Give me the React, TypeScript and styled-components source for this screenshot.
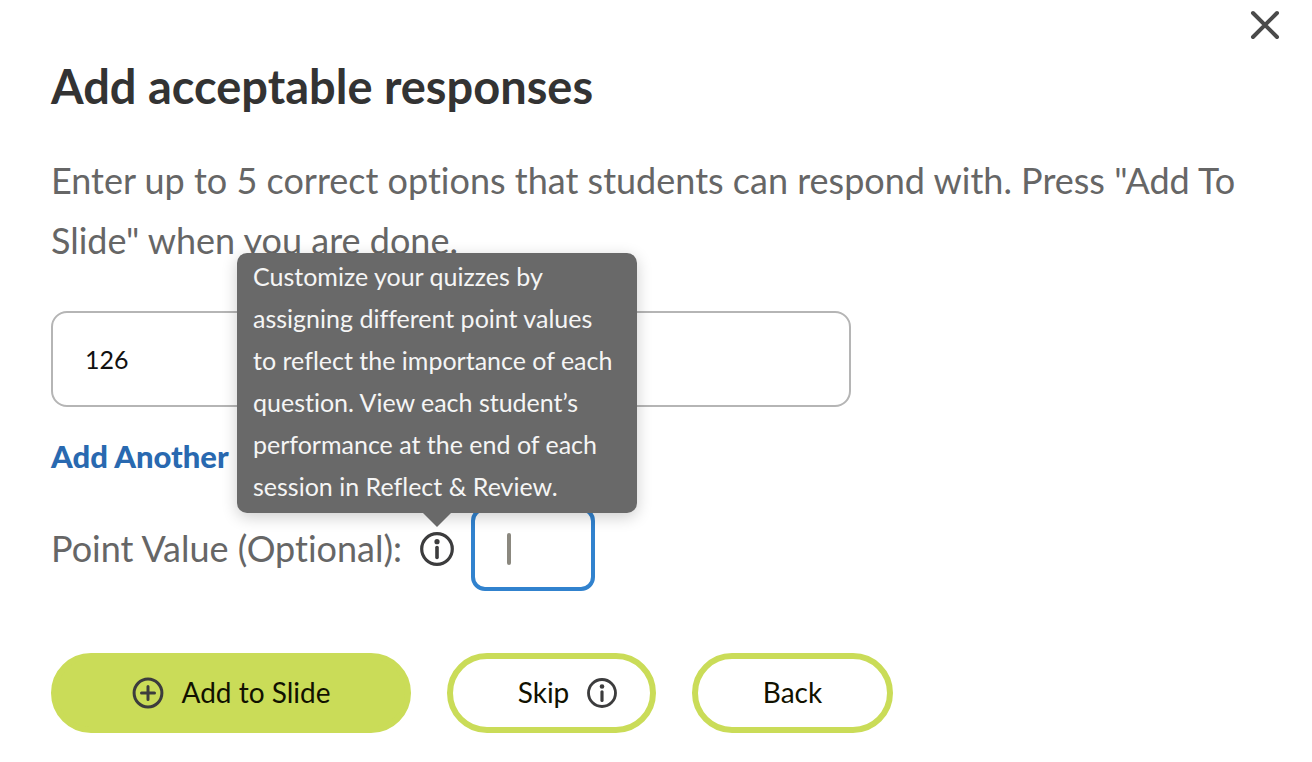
import React, { useState } from "react";
import styled, { createGlobalStyle } from "styled-components";

const GlobalStyle = createGlobalStyle`
  *, *::before, *::after {
    box-sizing: border-box;
  }
  body {
    margin: 0;
    background: #ffffff;
    color: #666666;
    font-family: Lato, "Open Sans", sans-serif;
    font-variant-ligatures: no-common-ligatures;
  }
`;

const Dialog = styled.main`
  position: relative;
  padding: 56px 52px 28px 51px;
`;

const CloseButton = styled.button`
  position: absolute;
  top: 8px;
  right: 30px;
  display: flex;
  padding: 0;
  border: 0;
  background: none;
  cursor: pointer;
`;

const Title = styled.h1`
  margin: 0;
  color: #333333;
  font-size: 47px;
  line-height: 60px;
  font-weight: 700;
`;

const Description = styled.p`
  margin: 34px 0 41px;
  font-size: 36px;
  line-height: 60px;
`;

const ResponseInput = styled.input`
  display: block;
  width: 100%;
  max-width: 800px;
  height: 96px;
  padding: 0 32px;
  border: 2px solid #b5b5b5;
  border-radius: 16px;
  background: #ffffff;
  color: #111111;
  font: inherit;
  font-size: 25px;
  outline: none;
`;

const AddLink = styled.a`
  display: block;
  width: fit-content;
  margin: 29px 0 31px;
  color: #2969b0;
  font-size: 31px;
  line-height: 40px;
  font-weight: 900;
  text-decoration: none;
`;

const PointRow = styled.div`
  display: flex;
  align-items: center;
`;

const PointLabel = styled.label`
  width: 369px;
  padding-bottom: 2px;
  font-size: 36px;
  line-height: 60px;
`;

const InfoAnchor = styled.span`
  position: relative;
  display: flex;
  margin-right: 17px;
`;

const Tooltip = styled.div`
  position: absolute;
  z-index: 1;
  bottom: calc(100% + 19px);
  left: 50%;
  width: 400px;
  margin-left: -200px;
  padding: 2px 16px 6px;
  border-radius: 10px;
  background: #696969;
  color: #f5f5f5;
  box-shadow: 0 4px 16px rgba(0, 0, 0, 0.2);
  font-size: 25px;
  line-height: 42px;
  white-space: pre;

  &::after {
    content: "";
    position: absolute;
    top: 100%;
    left: 50%;
    margin-left: -14px;
    border: 14px solid transparent;
    border-bottom: 0;
    border-top-color: #696969;
  }
`;

const PointField = styled.span`
  position: relative;
  display: flex;
`;

const PointInput = styled.input`
  width: 124px;
  height: 84px;
  padding: 0 32px;
  border: 4px solid #3182ce;
  border-radius: 14px;
  background: #ffffff;
  color: #111111;
  font: inherit;
  font-size: 25px;
  outline: none;
`;

const Caret = styled.span`
  position: absolute;
  top: 26px;
  left: 36px;
  width: 4px;
  height: 32px;
  border-radius: 2px;
  background: #8b887f;
  pointer-events: none;
`;

const Actions = styled.div`
  display: flex;
  flex-wrap: wrap;
  gap: 36px;
  margin-top: 62px;
`;

const PillButton = styled.button<{ $filled?: boolean; $trailingIcon?: boolean; $width: number }>`
  display: flex;
  align-items: center;
  justify-content: center;
  gap: 18px;
  min-width: ${({ $width }) => $width}px;
  height: 80px;
  padding: ${({ $trailingIcon }) => ($trailingIcon ? "0 32px 0 64px" : "0 32px")};
  border: 6px solid #cadc58;
  border-radius: 40px;
  background: ${({ $filled }) => ($filled ? "#cadc58" : "#ffffff")};
  color: #111100;
  font: inherit;
  font-size: 28px;
  line-height: 32px;
  cursor: pointer;
`;

const ButtonText = styled.span`
  padding-bottom: 2px;
`;

const InfoIcon = ({ size }: { size: number }) => (
  <svg width={size} height={size} viewBox="0 0 34 34" fill="none" aria-hidden="true">
    <circle cx="17" cy="17" r="15.3" stroke="#3c3c3d" strokeWidth="3.2" />
    <circle cx="17" cy="9.7" r="2.6" fill="#3c3c3d" />
    <path d="M17 15.6V25.4" stroke="#3c3c3d" strokeWidth="3.6" strokeLinecap="round" />
  </svg>
);

const PlusIcon = () => (
  <svg width="32" height="32" viewBox="0 0 32 32" fill="none" aria-hidden="true">
    <circle cx="16" cy="16" r="13.9" stroke="#3c3c3d" strokeWidth="3" />
    <path d="M16 9.5V22.5M9.5 16H22.5" stroke="#3c3c3d" strokeWidth="3" strokeLinecap="round" />
  </svg>
);

const tooltipText = `Customize your quizzes by
assigning different point values
to reflect the importance of each
question. View each student’s
performance at the end of each
session in Reflect & Review.`;

export default function App() {
  const [response, setResponse] = useState("126");
  const [points, setPoints] = useState("");

  return (
    <>
      <GlobalStyle />
      <Dialog>
        <CloseButton type="button" aria-label="Close">
          <svg width="34" height="34" viewBox="0 0 34 34" fill="none" aria-hidden="true">
            <path d="M5 5L29 29M29 5L5 29" stroke="#4a4a4a" strokeWidth="4" strokeLinecap="round" />
          </svg>
        </CloseButton>
        <Title>Add acceptable responses</Title>
        <Description>
          Enter up to 5 correct options that students can respond with. Press "Add To Slide" when you are done.
        </Description>
        <ResponseInput
          type="text"
          aria-label="Acceptable response"
          value={response}
          onChange={(e) => setResponse(e.target.value)}
        />
        <AddLink href="#add">Add Another</AddLink>
        <PointRow>
          <PointLabel htmlFor="points">Point Value (Optional):</PointLabel>
          <InfoAnchor>
            <InfoIcon size={34} />
            <Tooltip role="tooltip">{tooltipText}</Tooltip>
          </InfoAnchor>
          <PointField>
            <PointInput id="points" type="text" value={points} onChange={(e) => setPoints(e.target.value)} />
            {points === "" && <Caret />}
          </PointField>
        </PointRow>
        <Actions>
          <PillButton type="button" $filled $width={360}>
            <PlusIcon />
            <ButtonText>Add to Slide</ButtonText>
          </PillButton>
          <PillButton type="button" $trailingIcon $width={209}>
            <ButtonText>Skip</ButtonText>
            <InfoIcon size={30} />
          </PillButton>
          <PillButton type="button" $width={201}>
            <ButtonText>Back</ButtonText>
          </PillButton>
        </Actions>
      </Dialog>
    </>
  );
}
